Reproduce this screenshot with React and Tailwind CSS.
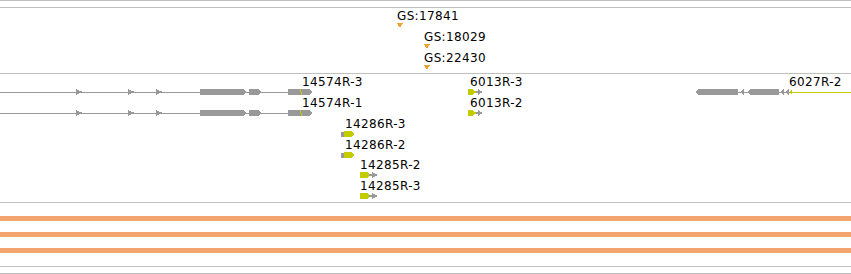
import React from "react";

const GRAY = "#999999";
const LIME = "#c4cc00";
const FONT = { fontFamily: "'DejaVu Sans', sans-serif", fontSize: 12, letterSpacing: "0.35px" };

// exon box with a right pointing tip
const Exon = ({ x1, x2, y, fill = GRAY }) => (
  <polygon points={`${x1},${y - 3} ${x2},${y - 3} ${x2 + 4},${y} ${x2},${y + 3} ${x1},${y + 3}`} fill={fill} />
);

const Tick = ({ x, y }) => <polygon points={`${x},${y - 3} ${x + 7},${y} ${x},${y + 3}`} fill={GRAY} />;

const Label = ({ x, y, children }) => (
  <text x={x} y={y} style={FONT} fill="#000">
    {children}
  </text>
);

const GeneModel = ({ y }) => (
  <g>
    <rect x={0} y={y} width={290} height={1} fill={GRAY} />
    <Tick x={76} y={y} />
    <Tick x={128} y={y} />
    <Tick x={156} y={y} />
    <Exon x1={200} x2={243} y={y} />
    <Exon x1={249} x2={258} y={y} />
    <Exon x1={288} x2={309} y={y} />
    <line x1={300.5} y1={y - 3} x2={301.5} y2={y + 3} stroke={LIME} strokeWidth={1} />
  </g>
);

const SmallFwd = ({ x, y }) => (
  <g>
    <rect x={x} y={y - 3} width={5} height={6} fill={LIME} />
    <polygon points={`${x + 4},${y - 3} ${x + 9},${y} ${x + 4},${y + 3}`} fill={LIME} />
    <rect x={x + 8} y={y - 1} width={4} height={2} fill={GRAY} />
    <polygon points={`${x + 10},${y - 3} ${x + 15},${y} ${x + 10},${y + 3}`} fill={GRAY} />
  </g>
);

const Stub = ({ x, y }) => (
  <g>
    <rect x={x} y={y - 2} width={4} height={5} fill={GRAY} />
    <polygon points={`${x + 3},${y - 3} ${x + 10},${y - 3} ${x + 13},${y} ${x + 10},${y + 3} ${x + 3},${y + 3}`} fill={LIME} />
  </g>
);

const Pair = ({ x, y }) => (
  <g>
    <polygon points={`${x},${y - 3} ${x + 7},${y - 3} ${x + 10},${y} ${x + 7},${y + 3} ${x},${y + 3}`} fill={LIME} />
    <rect x={x + 9} y={y - 1} width={5} height={2} fill={GRAY} />
    <polygon points={`${x + 12},${y - 3} ${x + 18},${y} ${x + 12},${y + 3}`} fill={GRAY} />
  </g>
);

const Sep = () => <div className="h-px w-full bg-[#c0c0c0]" />;

export default function App() {
  return (
    <div className="flex h-[274px] w-[851px] flex-col overflow-hidden bg-white">
      <Sep />
      <div className="h-[6px]" />
      <Sep />
      <svg width="851" height="65" viewBox="0 8 851 65" shapeRendering="crispEdges">
        <Label x={397} y={20}>GS:17841</Label>
        <polygon points="397,23 403,23 400,28" fill="#f0a22e" />
        <Label x={424} y={41}>GS:18029</Label>
        <polygon points="424,44 430,44 427,49" fill="#f0a22e" />
        <Label x={424} y={62}>GS:22430</Label>
        <polygon points="424,65 430,65 427,70" fill="#f0a22e" />
      </svg>
      <Sep />
      <svg width="851" height="128" viewBox="0 74 851 128" shapeRendering="crispEdges">
        <Label x={302} y={86}>14574R-3</Label>
        <GeneModel y={92} />
        <Label x={302} y={107}>14574R-1</Label>
        <GeneModel y={113} />

        <Label x={470} y={86}>6013R-3</Label>
        <SmallFwd x={468} y={92} />
        <Label x={470} y={107}>6013R-2</Label>
        <SmallFwd x={468} y={113} />

        <Label x={789} y={86}>6027R-2</Label>
        <rect x={738} y={92} width={52} height={1} fill={GRAY} />
        <polygon points="695,92 699,89 738,89 738,95 699,95" fill={GRAY} />
        <polygon points="740,92 744,89 744,95" fill={GRAY} />
        <polygon points="747,92 751,89 779,89 779,95 751,95" fill={GRAY} />
        <polygon points="780,92 784,89 784,95" fill={GRAY} />
        <polygon points="785,92 789,89 789,95" fill={GRAY} />
        <polygon points="789,92 792,89 792,95" fill={LIME} />
        <rect x={790} y={92} width={61} height={1} fill={LIME} />

        <Label x={345} y={128}>14286R-3</Label>
        <Stub x={341} y={134} />
        <Label x={345} y={149}>14286R-2</Label>
        <Stub x={341} y={155} />
        <Label x={360} y={169}>14285R-2</Label>
        <Pair x={360} y={175} />
        <Label x={360} y={190}>14285R-3</Label>
        <Pair x={360} y={196} />
      </svg>
      <Sep />
      <div className="flex h-[63px] flex-col gap-[11px] pt-[13px]">
        <div className="h-[5px] w-full bg-[#f4a46e]" />
        <div className="h-[5px] w-full bg-[#f4a46e]" />
        <div className="h-[5px] w-full bg-[#f4a46e]" />
      </div>
      <Sep />
      <div className="h-[6px]" />
      <Sep />
    </div>
  );
}
